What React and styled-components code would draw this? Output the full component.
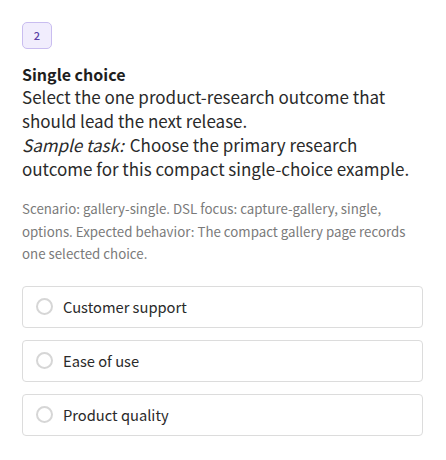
import styled, { createGlobalStyle } from "styled-components";

const GlobalStyle = createGlobalStyle`
  body {
    margin: 0;
    background: #ffffff;
    font-family: "Noto Sans CJK KR", "Noto Sans", sans-serif;
    color: #222222;
  }
`;

const options = ["Customer support", "Ease of use", "Product quality"];

export default function App() {
  return (
    <>
      <GlobalStyle />
      <Page>
        <Badge>2</Badge>
        <Title>Single choice</Title>
        <Description>
          <p>
            Select the one product-research outcome that should lead the next
            release.
          </p>
          <p>
            <em>Sample task:</em> Choose the primary research
            <br />
            outcome for this compact single-choice example.
          </p>
        </Description>
        <Note>
          Scenario: gallery-single. DSL focus: capture-gallery, single,
          options. Expected behavior: The compact gallery page records one
          selected choice.
        </Note>
        <OptionList>
          {options.map((label) => (
            <Option key={label}>
              <Radio />
              <span>{label}</span>
            </Option>
          ))}
        </OptionList>
      </Page>
    </>
  );
}

const Page = styled.div`
  padding: 22px 23px 22px 22px;
  display: flex;
  flex-direction: column;
  align-items: flex-start;
`;

const Badge = styled.div`
  width: 28px;
  height: 25px;
  display: flex;
  align-items: center;
  justify-content: center;
  border: 1px solid #c9bdf0;
  border-radius: 5px;
  background: #f1edfd;
  color: #5b3fa6;
  font-size: 11px;
  font-weight: 500;
  line-height: 1;
`;

const Title = styled.div`
  margin-top: 14px;
  font-size: 16px;
  font-weight: 700;
  line-height: 22px;
  color: #1e1e1e;
`;

const Description = styled.div`
  font-size: 17px;
  line-height: 24px;
  color: #2a2a2a;

  p {
    margin: 0;
  }

  em {
    font-style: italic;
    padding-right: 2px;
  }
`;

const Note = styled.div`
  margin-top: 17px;
  font-size: 13.3px;
  line-height: 22.5px;
  color: #7a7a7a;
`;

const OptionList = styled.div`
  margin-top: 20px;
  align-self: stretch;
  display: flex;
  flex-direction: column;
  gap: 12px;
`;

const Option = styled.label`
  height: 42px;
  box-sizing: border-box;
  display: flex;
  align-items: center;
  gap: 10px;
  padding: 0 13px;
  border: 1px solid #dcdcdc;
  border-radius: 4px;
  background: #ffffff;
  font-size: 14.7px;
  line-height: 20px;
  color: #2a2a2a;
`;

const Radio = styled.span`
  width: 17px;
  height: 17px;
  box-sizing: border-box;
  border: 2px solid #d6d6d6;
  border-radius: 50%;
  flex-shrink: 0;
`;
